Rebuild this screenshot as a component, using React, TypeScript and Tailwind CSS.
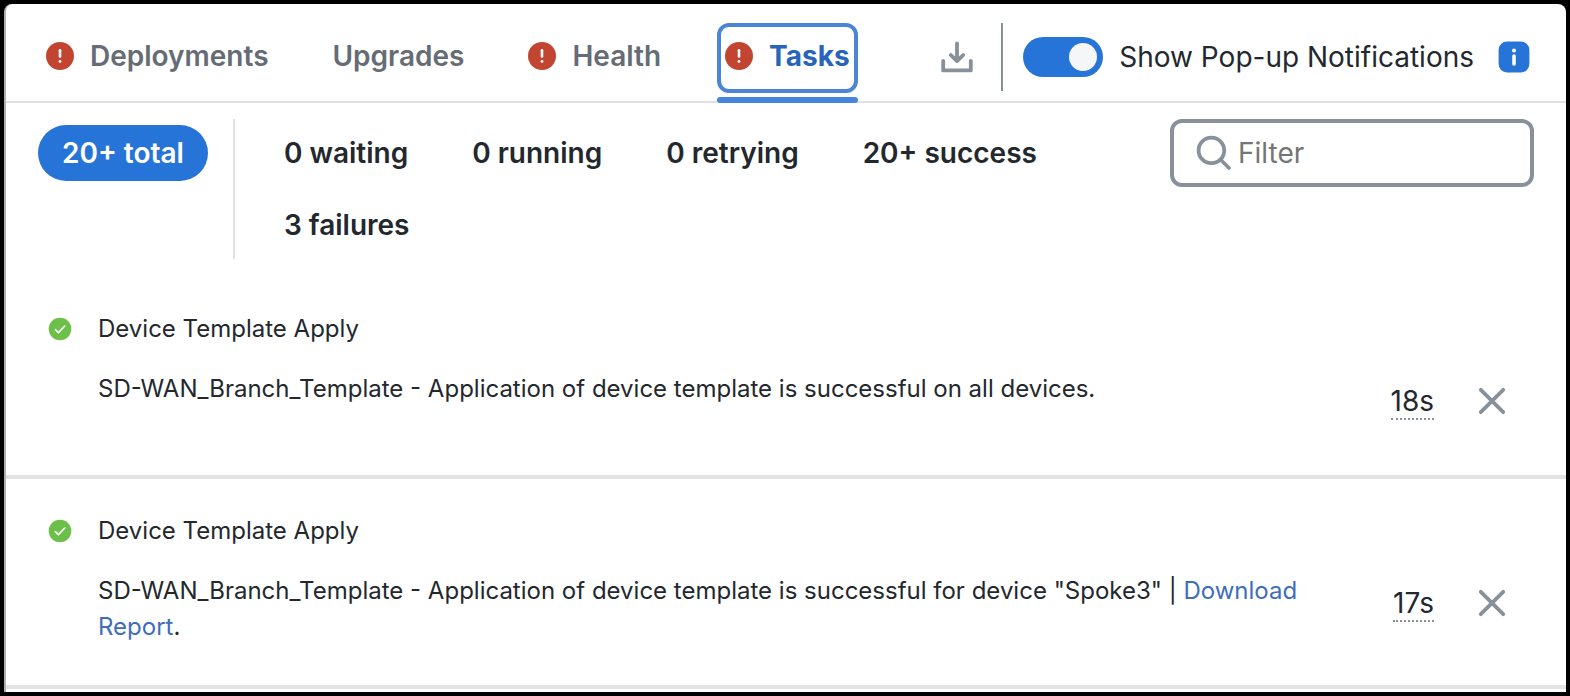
import { useState } from "react";

type Tab = { name: string; alert: boolean };

const tabs: Tab[] = [
  { name: "Deployments", alert: true },
  { name: "Upgrades", alert: false },
  { name: "Health", alert: true },
  { name: "Tasks", alert: true },
];

const statuses = ["0 waiting", "0 running", "0 retrying", "20+ success", "3 failures"];

const tasks = [
  {
    title: "Device Template Apply",
    text: "SD-WAN_Branch_Template - Application of device template is successful on all devices.",
    report: false,
    time: "18s",
  },
  {
    title: "Device Template Apply",
    text: 'SD-WAN_Branch_Template - Application of device template is successful for device "Spoke3"',
    report: true,
    time: "17s",
  },
];

function AlertIcon() {
  return (
    <svg viewBox="0 0 28 28" className="size-7 shrink-0" aria-hidden="true">
      <circle cx="14" cy="14" r="14" fill="#c24532" />
      <path d="M14 8.2v6.2" stroke="#fff" strokeWidth="2.6" strokeLinecap="round" />
      <circle cx="14" cy="19.4" r="1.4" fill="#fff" />
    </svg>
  );
}

function SuccessIcon() {
  return (
    <svg viewBox="0 0 24 24" className="size-6 shrink-0" aria-hidden="true">
      <circle cx="12" cy="12" r="11.3" fill="#6cc04a" />
      <path
        d="M7.4 12.6l3 3 6.4-6.6"
        fill="none"
        stroke="#fff"
        strokeWidth="1.6"
        strokeLinecap="round"
        strokeLinejoin="round"
      />
    </svg>
  );
}

function DownloadIcon() {
  return (
    <svg
      viewBox="0 0 32 32"
      className="size-8"
      fill="none"
      stroke="#889099"
      strokeWidth="3.8"
      strokeLinecap="round"
      strokeLinejoin="round"
      aria-hidden="true"
    >
      <path d="M16 2.4v17.6M9.8 14l6.2 6.2 6.2-6.2" />
      <path d="M2.2 19.8v9.6h27.6v-9.6" />
    </svg>
  );
}

function InfoIcon() {
  return (
    <svg viewBox="0 0 32 32" className="size-8" aria-hidden="true">
      <rect x="0.6" y="0.6" width="30.8" height="30.8" rx="8.5" fill="#2774d9" />
      <circle cx="16" cy="9.6" r="2" fill="#fff" />
      <path d="M16 15v8" stroke="#fff" strokeWidth="3.6" strokeLinecap="round" />
    </svg>
  );
}

function SearchIcon() {
  return (
    <svg
      viewBox="0 0 36 36"
      className="size-9 shrink-0"
      fill="none"
      stroke="#889099"
      strokeWidth="3.8"
      strokeLinecap="round"
      aria-hidden="true"
    >
      <circle cx="15.4" cy="15.4" r="12.8" />
      <path d="M25 25l8 8" />
    </svg>
  );
}

function CloseIcon() {
  return (
    <svg
      viewBox="0 0 28 28"
      className="size-7"
      stroke="#889099"
      strokeWidth="3.8"
      strokeLinecap="round"
      aria-hidden="true"
    >
      <path d="M2.8 2.8l22.4 22.4M25.2 2.8L2.8 25.2" />
    </svg>
  );
}

export default function App() {
  const [active, setActive] = useState("Tasks");
  const [popups, setPopups] = useState(true);
  const [query, setQuery] = useState("");

  return (
    <div className="min-h-screen bg-black p-1 font-['Inter',sans-serif] text-[28px] leading-9 text-[#23282e]">
      <main className="rounded-t-lg border-l-2 border-[#b0b0b0] bg-white pb-[3px]">
        <header className="flex items-start justify-between border-b-2 border-[#e1e1e3] pr-9 pl-8">
          <div role="tablist" className="-mb-[2px] flex gap-12 pt-[19px]">
            {tabs.map((tab) => {
              const selected = tab.name === active;
              return (
                <button
                  key={tab.name}
                  role="tab"
                  aria-selected={selected}
                  onClick={() => setActive(tab.name)}
                  className={
                    "flex flex-col gap-1 " +
                    (selected ? "font-bold text-[#2864bb]" : "font-semibold text-[#656c75]")
                  }
                >
                  <span
                    className={
                      "flex h-[70px] items-center gap-4 rounded-xl border-4 px-1 pb-1 " +
                      (selected ? "border-[#4c85d6]" : "border-transparent")
                    }
                  >
                    {tab.alert && <AlertIcon />}
                    {tab.name}
                  </span>
                  <span
                    className={"h-1.5 w-full rounded-full " + (selected ? "bg-[#4785dc]" : "bg-transparent")}
                  />
                </button>
              );
            })}
          </div>

          <div className="mt-[19px] flex h-[68px] items-center">
            <button aria-label="Download" className="pr-7">
              <DownloadIcon />
            </button>
            <label className="flex h-full items-center gap-4 border-l-2 border-[#889099] pl-5">
              <input
                type="checkbox"
                role="switch"
                checked={popups}
                onChange={(e) => setPopups(e.target.checked)}
                className="h-10 w-20 appearance-none rounded-full bg-[#b0b5bb] p-1.5 before:block before:size-7 before:rounded-full before:bg-[#f5f6f7] checked:bg-[#2774d9] checked:before:ml-auto"
              />
              Show Pop-up Notifications
            </label>
            <button aria-label="About notifications" className="pl-6">
              <InfoIcon />
            </button>
          </div>
        </header>

        <section className="flex items-start px-8 pt-4 pb-[18px]">
          <button className="mt-1.5 mr-[25px] h-14 shrink-0 rounded-full bg-[#2774d9] px-6 font-semibold text-white">
            20+ total
          </button>
          <div className="flex flex-1 flex-wrap gap-4 border-l-2 border-[#e1e1e3] py-1.5 pl-[25px]">
            {statuses.map((status) => (
              <button key={status} className="h-14 px-6 font-semibold">
                {status}
              </button>
            ))}
          </div>
          <label className="flex h-[68px] w-[364px] shrink-0 items-center gap-1.5 rounded-xl border-4 border-[#889099] px-[22px]">
            <SearchIcon />
            <input
              type="text"
              aria-label="Filter"
              placeholder="Filter"
              value={query}
              onChange={(e) => setQuery(e.target.value)}
              className="w-full min-w-0 bg-transparent outline-none placeholder:text-[#757575]"
            />
          </label>
        </section>

        <ul>
          {tasks.map((task) => (
            <li
              key={task.time}
              className="flex min-h-[202px] items-start border-b-4 border-[#e3e3e5] pt-[34px] pr-[60px] pb-10 pl-[42px] text-2xl leading-9"
            >
              <div className="flex h-9 items-center pr-[26px]">
                <SuccessIcon />
              </div>
              <div className="flex-1 space-y-6">
                <h2>{task.title}</h2>
                <p>
                  {task.text}
                  {task.report && (
                    <>
                      {" | "}
                      <a href="#report" className="text-[#3e6dbb]">
                        Download Report
                      </a>
                      .
                    </>
                  )}
                </p>
              </div>
              <div className="flex items-start gap-11 pt-[73px] pl-11 text-[28px] leading-[34px]">
                <span className="border-b-2 border-dotted border-[#889099]">{task.time}</span>
                <button aria-label="Dismiss" className="flex h-[34px] items-center">
                  <CloseIcon />
                </button>
              </div>
            </li>
          ))}
        </ul>
      </main>
    </div>
  );
}
